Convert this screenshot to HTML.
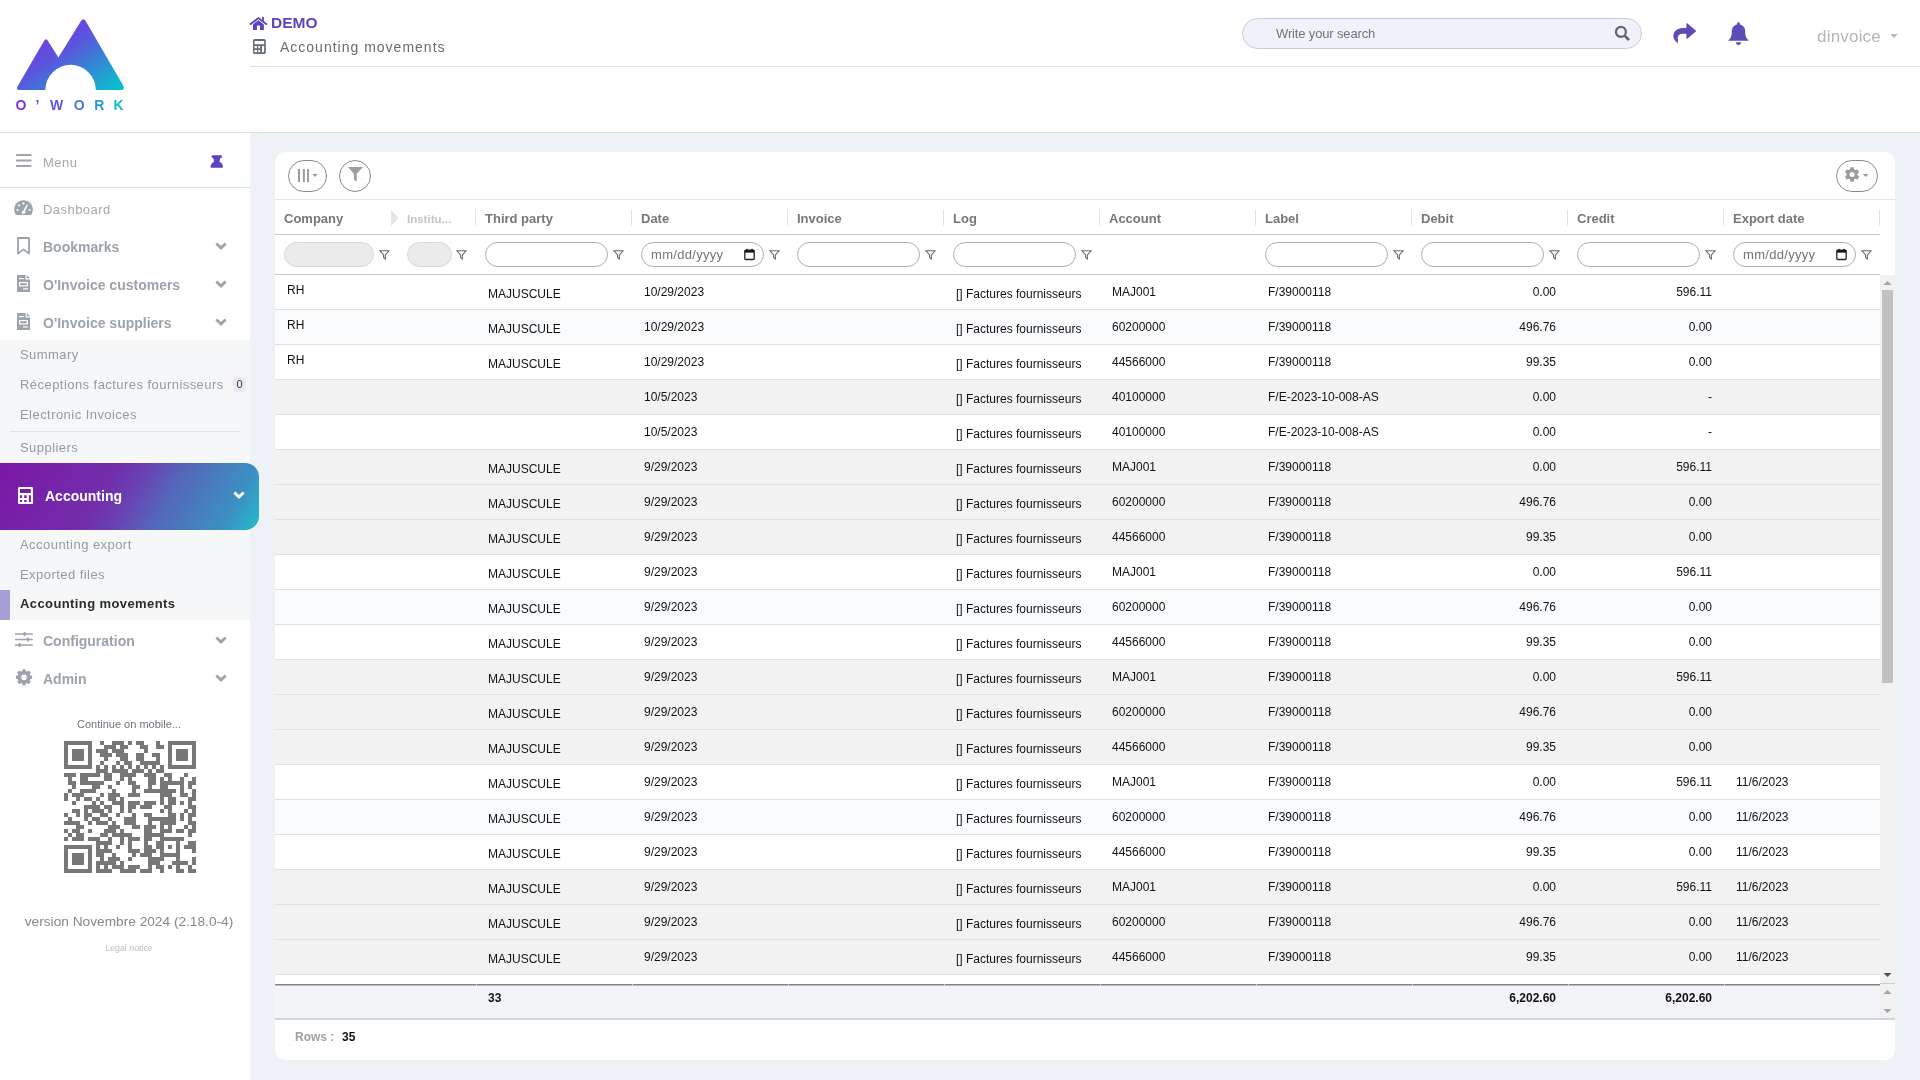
<!DOCTYPE html>
<html><head><meta charset="utf-8"><style>
*{box-sizing:border-box;margin:0;padding:0}
html,body{width:1920px;height:1080px;overflow:hidden;background:#fff;font-family:"Liberation Sans",sans-serif}
body{will-change:transform}
.abs{position:absolute}
#main{position:absolute;left:250px;top:133px;width:1670px;height:947px;background:#eef1f6}
#hdrline{position:absolute;left:250px;top:66px;width:1670px;height:1px;background:#dee2e6}
#sbline{position:absolute;left:0;top:132px;width:1920px;height:1px;background:#dde2e8}
.sb{position:absolute;white-space:nowrap}
.mi{position:absolute;left:43px;font-size:14px;font-weight:bold;color:#9ca3ab;white-space:nowrap;line-height:16px}
.si{position:absolute;left:20px;font-size:13px;color:#959a9f;white-space:nowrap;line-height:15px;letter-spacing:0.45px}
.chev{position:absolute;left:214.5px;width:12px;height:8px}
#card{position:absolute;left:275px;top:152px;width:1620px;height:908px;background:#fff;border-radius:10px;overflow:hidden}
.tr{position:absolute;left:0;width:1605px;height:35px;border-bottom:1px solid #dde1e3}
.c{position:absolute;font-size:12px;color:#111;white-space:nowrap;line-height:14px}
.c.r{left:auto}
.th{position:absolute;top:59px;font-size:13px;font-weight:bold;color:#777;white-space:nowrap;line-height:15px}
.sep{position:absolute;top:58px;width:1px;height:16px;background:#e2e2e2}
.fi{position:absolute;top:90px;height:25px;border:1px solid #a3b3b3;border-radius:13px;background:#fff}
.fi.dis{background:#ebebeb;border-color:#d4dada}
.fn{position:absolute;top:98px}
.dt{position:absolute;top:96px;font-size:13px;color:#757575;line-height:14px;letter-spacing:0.3px}
.cal{position:absolute;top:96px;width:11px;height:13px}
</style></head><body>

<div id="main"></div>
<!-- header -->
<svg class="abs" style="left:15px;top:17px" width="125" height="100" viewBox="15 17 125 100">
<defs><linearGradient id="lg" x1="0" y1="0" x2="1" y2="1" gradientUnits="objectBoundingBox">
<stop offset="0" stop-color="#8f22f0"/><stop offset="0.45" stop-color="#5a55dc"/><stop offset="1" stop-color="#00cacc"/></linearGradient>
<linearGradient id="lg2" x1="0" y1="0" x2="1" y2="0"><stop offset="0" stop-color="#7a35e0"/><stop offset="1" stop-color="#10c0cf"/></linearGradient></defs>
<path d="M17.5 86.5 L44 41 Q46 37.5 48 41 L58.4 57.5 L81 21 Q83.3 17.5 85.6 21 L123.5 86 Q125 90 121 90 L95.8 90 A25.2 25.2 0 0 0 45.4 90 L20 90 Q15.5 90 17.5 86.5 Z" fill="url(#lg)"/>
<g font-family="Liberation Sans" font-weight="bold" font-size="14" text-anchor="middle"><text x="21" y="110" fill="#7b35e6">O</text><text x="37.5" y="110" fill="#6a45e0">’</text><text x="56.6" y="110" fill="#5b58dc">W</text><text x="79.2" y="110" fill="#4a7ad8">O</text><text x="99.4" y="110" fill="#2e9ad4">R</text><text x="118.5" y="110" fill="#12bccf">K</text></g>
</svg>

<div id="hdrline"></div>
<div id="sbline"></div>

<svg class="abs" style="left:246px;top:12px" width="26" height="22" viewBox="0 0 26 22"><g fill="#5a45c0"><path d="M4.6 12.1 L12.4 6.1 L20.2 12.1" fill="none" stroke="#5a45c0" stroke-width="1.9" stroke-linecap="round" stroke-linejoin="miter"/><rect x="16.1" y="5" width="1.8" height="4.6"/><path d="M7 12.4 L12.4 8.2 L17.9 12.4 V17.9 H14 V13.4 H10.9 V17.9 H7 Z"/></g></svg>
<div class="sb" style="left:271px;top:14px;font-size:15.5px;font-weight:bold;color:#5a45c0;line-height:17px">DEMO</div>
<svg class="abs" style="left:252.8px;top:38.9px" width="12.8" height="15" viewBox="0 0 12.8 15"><path fill-rule="evenodd" d="M1.5 0 H11.3 Q12.8 0 12.8 1.5 V13.5 Q12.8 15 11.3 15 H1.5 Q0 15 0 13.5 V1.5 Q0 0 1.5 0 Z M1.50 1.90 H11.20 V5.20 H1.50 Z M1.50 6.90 H4.00 V9.30 H1.50 Z M5.20 6.90 H7.20 V9.30 H5.20 Z M1.50 10.90 H4.00 V13.20 H1.50 Z M5.20 10.90 H7.20 V13.20 H5.20 Z M9.00 6.90 H11.10 V13.20 H9.00 Z" fill="#656d74"/></svg>
<div class="sb" style="left:280px;top:39px;font-size:14px;color:#656d74;line-height:16px;letter-spacing:1px">Accounting movements</div>

<div class="abs" style="left:1242px;top:18px;width:400px;height:31px;border:1px solid #c9ced6;border-radius:16px;background:#f0f1fa"></div>
<div class="sb" style="left:1276px;top:26px;font-size:13px;color:#6c757d;line-height:15px;letter-spacing:-0.15px">Write your search</div>
<svg class="abs" style="left:1614px;top:25px" width="17" height="17" viewBox="0 0 17 17"><circle cx="6.9" cy="6.9" r="4.95" fill="none" stroke="#5f676e" stroke-width="2.2"/><path d="M10.6 10.6 L15.0 15.0" stroke="#5f676e" stroke-width="2.7" stroke-linecap="butt"/></svg>
<svg class="abs" style="left:1668px;top:18px" width="30" height="30" viewBox="0 0 30 30"><path d="M9.5 25.1 C6.2 22.5 4.9 19.5 5.4 16.8 C6.2 12.5 10.2 10.1 15.5 10.1 H18.4 V5.4 Q18.6 4.8 19.2 5.2 L27.8 12.5 Q28.2 13 27.8 13.5 L19.2 20.7 Q18.6 21.1 18.4 20.5 V15.7 H15.5 C11.5 15.7 9.8 17.3 9.8 19.8 C9.8 21.5 10.1 23.3 9.9 24.6 Q9.8 25.3 9.5 25.1 Z" fill="#5a4db8"/></svg>
<svg class="abs" style="left:1728px;top:22px" width="21" height="23" viewBox="0 0 21 23"><path d="M10.5 0.3 C11.4 0.3 11.9 1 11.9 1.8 V2.6 C15.2 3.3 17.2 6 17.2 9.4 C17.2 14.3 18.3 15.9 20.2 17.8 C20.8 18.4 20.6 18.8 19.9 18.8 H1.1 C0.4 18.8 0.2 18.4 0.8 17.8 C2.7 15.9 3.8 14.3 3.8 9.4 C3.8 6 5.8 3.3 9.1 2.6 V1.8 C9.1 1 9.6 0.3 10.5 0.3 Z M8 20.3 H13 C13 21.9 11.9 22.9 10.5 22.9 C9.1 22.9 8 21.9 8 20.3 Z" fill="#5a4db8"/></svg>
<div class="sb" style="left:1817px;top:27px;font-size:17px;color:#b3b8bd;line-height:20px;letter-spacing:0.2px">dinvoice</div>
<svg class="abs" style="left:1890px;top:34px" width="8" height="5" viewBox="0 0 8 5"><path d="M0.3 0 H7.7 L4 3.9 Z" fill="#b3b8bd"/></svg>

<!-- sidebar -->
<svg class="abs" style="left:16px;top:154px" width="16" height="14" viewBox="0 0 16 14"><g fill="#9ca3ab"><rect x="0" y="0.1" width="15.5" height="2" rx="0.9"/><rect x="0" y="5.6" width="15.5" height="2" rx="0.9"/><rect x="0" y="11" width="15.5" height="2" rx="0.9"/></g></svg>
<div class="sb" style="left:43px;top:155px;font-size:13px;color:#a3a9b0;line-height:16px;letter-spacing:0.5px">Menu</div>
<svg class="abs" style="left:208px;top:154px" width="16" height="15" viewBox="0 0 16 15"><path d="M4 1.5 Q4 1.2 5 1.2 H13 Q14 1.2 14 2.2 Q14 4.3 12 4.5 L11.5 7.8 Q14.8 9.3 15 12.8 Q15 13.8 14 13.8 H3.5 Q2.5 13.8 2.5 12.8 Q2.7 9.3 6 7.8 L5.5 4.5 Q3.5 4.3 3.5 2.2 Z" fill="#5a45c0"/></svg>
<div class="abs" style="left:0;top:187px;width:250px;height:1px;background:#dde2e8"></div>

<svg class="abs" style="left:14px;top:200px" width="19" height="16" viewBox="0 0 19 16"><path d="M9.5 0.3 C4.3 0.3 0.2 4.5 0.2 9.6 C0.2 11.6 0.8 13.5 1.9 15.1 H17.1 C18.2 13.5 18.8 11.6 18.8 9.6 C18.8 4.5 14.7 0.3 9.5 0.3 Z" fill="#9ca3ab"/><g fill="#fff"><circle cx="3.5" cy="10" r="1.1"/><circle cx="5" cy="5.3" r="1.1"/><circle cx="9.5" cy="3.4" r="1.1"/><circle cx="15.5" cy="10" r="1.1"/><path d="M12.8 4.2 L13.9 4.7 L11.2 11.2 C11.8 11.9 11.6 13.3 10.6 13.7 H8.3 C7.4 13 7.4 11.3 9.2 10.8 Z"/></g></svg>
<div class="sb" style="left:43px;top:202px;font-size:13px;color:#a3a9b0;line-height:16px;letter-spacing:0.45px">Dashboard</div>

<svg class="abs" style="left:17px;top:237px" width="13" height="18" viewBox="0 0 13 18"><path d="M1 1 H12 V16.6 L6.5 12.4 L1 16.6 Z" fill="none" stroke="#9ca3ab" stroke-width="1.8" stroke-linejoin="round"/></svg>
<div class="mi" style="top:239px">Bookmarks</div>
<svg class="chev" style="top:242px" viewBox="0 0 12 8"><path d="M1.4 1.4 L6 6 L10.6 1.4" fill="none" stroke="#9ca3ab" stroke-width="2.8"/></svg>

<svg class="abs" style="left:17px;top:275px" width="13" height="17" viewBox="0 0 13 17"><path d="M0 0 H8.5 V4.5 H13 V17 H0 Z M9.7 0 L13 3.3 H9.7 Z" fill="#9ca3ab"/><g fill="#fff"><rect x="2" y="3" width="5" height="1.2"/><rect x="2" y="7" width="9" height="4.5"/><rect x="6" y="13.3" width="5" height="1.2"/></g><rect x="3.2" y="8.2" width="6.6" height="2.1" fill="#9ca3ab"/></svg>
<div class="mi" style="top:277px">O'Invoice customers</div>
<svg class="chev" style="top:280px" viewBox="0 0 12 8"><path d="M1.4 1.4 L6 6 L10.6 1.4" fill="none" stroke="#9ca3ab" stroke-width="2.8"/></svg>

<svg class="abs" style="left:17px;top:313px" width="13" height="17" viewBox="0 0 13 17"><path d="M0 0 H8.5 V4.5 H13 V17 H0 Z M9.7 0 L13 3.3 H9.7 Z" fill="#9ca3ab"/><g fill="#fff"><rect x="2" y="3" width="5" height="1.2"/><rect x="2" y="7" width="9" height="4.5"/><rect x="6" y="13.3" width="5" height="1.2"/></g><rect x="3.2" y="8.2" width="6.6" height="2.1" fill="#9ca3ab"/></svg>
<div class="mi" style="top:315px">O'Invoice suppliers</div>
<svg class="chev" style="top:318px" viewBox="0 0 12 8"><path d="M1.4 1.4 L6 6 L10.6 1.4" fill="none" stroke="#9ca3ab" stroke-width="2.8"/></svg>

<div class="abs" style="left:0;top:340px;width:250px;height:123px;background:#f6f7f9"></div>
<div class="si" style="top:347px">Summary</div>
<div class="si" style="top:377px">Réceptions factures fournisseurs</div>
<div class="abs" style="left:233px;top:377px;width:13px;height:15px;background:#ebe8f6;border-radius:3px;font-size:11px;color:#333;text-align:center;line-height:15px">0</div>
<div class="si" style="top:407px">Electronic Invoices</div>
<div class="abs" style="left:10px;top:431px;width:230px;height:1px;background:#dfe2e6"></div>
<div class="si" style="top:440px">Suppliers</div>

<div class="abs" style="left:0;top:463px;width:259px;height:67px;border-radius:0 14px 14px 0;background:linear-gradient(120deg,#7b17a6 0%,#722eab 40%,#6a40b2 50%,#5566b9 63%,#3c90c2 87%,#22bccb 100%)"></div>
<svg class="abs" style="left:18.2px;top:486.9px" width="15.1" height="17.1" viewBox="0 0 15.1 17.1"><path fill-rule="evenodd" d="M1.5 0 H13.6 Q15.1 0 15.1 1.5 V15.600000000000001 Q15.1 17.1 13.6 17.1 H1.5 Q0 17.1 0 15.600000000000001 V1.5 Q0 0 1.5 0 Z M2.00 2.10 H12.80 V6.10 H2.00 Z M2.00 8.20 H4.10 V11.00 H2.00 Z M6.20 8.20 H8.70 V11.00 H6.20 Z M2.00 13.00 H4.10 V14.90 H2.00 Z M6.20 13.00 H8.70 V14.90 H6.20 Z M10.90 8.20 H12.90 V14.90 H10.90 Z" fill="#fff"/></svg>
<div class="mi" style="left:45px;top:488px;color:#fff">Accounting</div>
<svg class="chev" style="left:232.5px;top:491px" viewBox="0 0 12 8"><path d="M1.4 1.4 L6 6 L10.6 1.4" fill="none" stroke="#fff" stroke-width="2.8"/></svg>

<div class="abs" style="left:0;top:530px;width:250px;height:90px;background:#f6f7f9"></div>
<div class="si" style="top:537px">Accounting export</div>
<div class="si" style="top:567px">Exported files</div>
<div class="abs" style="left:0;top:590px;width:10px;height:30px;background:#a59fd5"></div>
<div class="si" style="top:596px;font-weight:bold;color:#2b2b2b;letter-spacing:0.4px">Accounting movements</div>

<svg class="abs" style="left:15px;top:632px" width="18" height="15" viewBox="0 0 18 15"><g fill="#9ca3ab"><rect x="0" y="1.2" width="17.8" height="1.6" rx="0.5"/><rect x="0" y="6.7" width="17.8" height="1.6" rx="0.5"/><rect x="0" y="12.2" width="17.8" height="1.6" rx="0.5"/><rect x="8.5" y="0" width="2.2" height="4" rx="0.8"/><rect x="11.8" y="5.5" width="2.2" height="4" rx="0.8"/><rect x="3.5" y="11" width="2.2" height="4" rx="0.8"/></g></svg>
<div class="mi" style="top:633px">Configuration</div>
<svg class="chev" style="top:636px" viewBox="0 0 12 8"><path d="M1.4 1.4 L6 6 L10.6 1.4" fill="none" stroke="#9ca3ab" stroke-width="2.8"/></svg>

<svg class="abs" style="left:14px;top:667px" width="20" height="20" viewBox="0 0 20 20"><path fill-rule="evenodd" d="M11.97 4.21 L11.49 2.14 L8.51 2.14 L8.03 4.21 L7.87 4.26 L7.71 4.32 L7.55 4.39 L7.39 4.45 L7.24 4.53 L7.09 4.60 L5.28 3.47 L3.17 5.58 L4.30 7.39 L4.23 7.54 L4.15 7.69 L4.09 7.85 L4.02 8.01 L3.96 8.17 L3.91 8.33 L1.84 8.81 L1.84 11.79 L3.91 12.27 L3.96 12.43 L4.02 12.59 L4.09 12.75 L4.15 12.91 L4.23 13.06 L4.30 13.21 L3.17 15.02 L5.28 17.13 L7.09 16.00 L7.24 16.07 L7.39 16.15 L7.55 16.21 L7.71 16.28 L7.87 16.34 L8.03 16.39 L8.51 18.46 L11.49 18.46 L11.97 16.39 L12.13 16.34 L12.29 16.28 L12.45 16.21 L12.61 16.15 L12.76 16.07 L12.91 16.00 L14.72 17.13 L16.83 15.02 L15.70 13.21 L15.77 13.06 L15.85 12.91 L15.91 12.75 L15.98 12.59 L16.04 12.43 L16.09 12.27 L18.16 11.79 L18.16 8.81 L16.09 8.33 L16.04 8.17 L15.98 8.01 L15.91 7.85 L15.85 7.69 L15.77 7.54 L15.70 7.39 L16.83 5.58 L14.72 3.47 L12.91 4.60 L12.76 4.53 L12.61 4.45 L12.45 4.39 L12.29 4.32 L12.13 4.26 Z M12.8 10.3 A2.8 2.8 0 1 0 7.2 10.3 A2.8 2.8 0 1 0 12.8 10.3 Z" fill="#9ca3ab"/></svg>
<div class="mi" style="top:671px">Admin</div>
<svg class="chev" style="top:674px" viewBox="0 0 12 8"><path d="M1.4 1.4 L6 6 L10.6 1.4" fill="none" stroke="#9ca3ab" stroke-width="2.8"/></svg>

<div class="sb" style="left:0;width:258px;text-align:center;top:718px;font-size:11px;color:#6c757d;line-height:13px">Continue on mobile...</div>
<svg class="abs" style="left:64px;top:741px" width="132" height="132" viewBox="0 0 132 132"><path d="M0 0h28v4h-28zM36 0h4v4h-4zM48 0h12v4h-12zM64 0h4v4h-4zM72 0h8v4h-8zM92 0h4v4h-4zM104 0h28v4h-28zM0 4h4v4h-4zM24 4h4v4h-4zM40 4h12v4h-12zM56 4h8v4h-8zM76 4h8v4h-8zM92 4h8v4h-8zM104 4h4v4h-4zM128 4h4v4h-4zM0 8h4v4h-4zM8 8h12v4h-12zM24 8h4v4h-4zM32 8h12v4h-12zM48 8h12v4h-12zM80 8h4v4h-4zM104 8h4v4h-4zM112 8h12v4h-12zM128 8h4v4h-4zM0 12h4v4h-4zM8 12h12v4h-12zM24 12h4v4h-4zM36 12h12v4h-12zM52 12h12v4h-12zM72 12h8v4h-8zM88 12h8v4h-8zM104 12h4v4h-4zM112 12h12v4h-12zM128 12h4v4h-4zM0 16h4v4h-4zM8 16h12v4h-12zM24 16h4v4h-4zM40 16h4v4h-4zM56 16h8v4h-8zM72 16h8v4h-8zM92 16h4v4h-4zM104 16h4v4h-4zM112 16h12v4h-12zM128 16h4v4h-4zM0 20h4v4h-4zM24 20h4v4h-4zM36 20h4v4h-4zM52 20h4v4h-4zM60 20h8v4h-8zM76 20h20v4h-20zM104 20h4v4h-4zM128 20h4v4h-4zM0 24h28v4h-28zM32 24h4v4h-4zM40 24h4v4h-4zM48 24h4v4h-4zM56 24h4v4h-4zM64 24h4v4h-4zM72 24h4v4h-4zM80 24h4v4h-4zM88 24h4v4h-4zM96 24h4v4h-4zM104 24h28v4h-28zM32 28h12v4h-12zM48 28h16v4h-16zM68 28h12v4h-12zM84 28h4v4h-4zM92 28h8v4h-8zM0 32h12v4h-12zM16 32h20v4h-20zM40 32h8v4h-8zM56 32h16v4h-16zM80 32h12v4h-12zM100 32h8v4h-8zM120 32h4v4h-4zM4 36h4v4h-4zM16 36h8v4h-8zM40 36h8v4h-8zM56 36h4v4h-4zM64 36h4v4h-4zM84 36h8v4h-8zM96 36h4v4h-4zM104 36h4v4h-4zM116 36h4v4h-4zM128 36h4v4h-4zM4 40h8v4h-8zM16 40h24v4h-24zM52 40h4v4h-4zM64 40h8v4h-8zM84 40h8v4h-8zM96 40h24v4h-24zM124 40h8v4h-8zM8 44h4v4h-4zM28 44h8v4h-8zM44 44h4v4h-4zM68 44h8v4h-8zM84 44h4v4h-4zM96 44h8v4h-8zM116 44h4v4h-4zM124 44h4v4h-4zM4 48h4v4h-4zM16 48h16v4h-16zM48 48h4v4h-4zM68 48h4v4h-4zM80 48h32v4h-32zM116 48h4v4h-4zM128 48h4v4h-4zM0 52h4v4h-4zM8 52h12v4h-12zM36 52h4v4h-4zM44 52h12v4h-12zM64 52h12v4h-12zM96 52h12v4h-12zM116 52h8v4h-8zM128 52h4v4h-4zM0 56h4v4h-4zM12 56h4v4h-4zM20 56h8v4h-8zM32 56h4v4h-4zM44 56h8v4h-8zM56 56h4v4h-4zM96 56h4v4h-4zM104 56h8v4h-8zM124 56h8v4h-8zM8 60h4v4h-4zM28 60h4v4h-4zM36 60h4v4h-4zM48 60h12v4h-12zM64 60h12v4h-12zM80 60h12v4h-12zM96 60h4v4h-4zM104 60h8v4h-8zM116 60h4v4h-4zM124 60h4v4h-4zM20 64h16v4h-16zM40 64h8v4h-8zM56 64h4v4h-4zM64 64h8v4h-8zM76 64h12v4h-12zM100 64h8v4h-8zM124 64h8v4h-8zM8 68h8v4h-8zM20 68h4v4h-4zM28 68h12v4h-12zM44 68h4v4h-4zM56 68h4v4h-4zM64 68h4v4h-4zM96 68h4v4h-4zM104 68h4v4h-4zM120 68h4v4h-4zM128 68h4v4h-4zM0 72h4v4h-4zM12 72h4v4h-4zM20 72h8v4h-8zM36 72h8v4h-8zM52 72h4v4h-4zM68 72h4v4h-4zM80 72h8v4h-8zM104 72h8v4h-8zM116 72h4v4h-4zM124 72h8v4h-8zM4 76h4v4h-4zM20 76h4v4h-4zM28 76h8v4h-8zM44 76h4v4h-4zM60 76h12v4h-12zM84 76h28v4h-28zM116 76h4v4h-4zM124 76h4v4h-4zM0 80h16v4h-16zM24 80h4v4h-4zM32 80h12v4h-12zM48 80h4v4h-4zM60 80h12v4h-12zM84 80h4v4h-4zM96 80h16v4h-16zM124 80h8v4h-8zM12 84h8v4h-8zM44 84h12v4h-12zM68 84h8v4h-8zM80 84h12v4h-12zM96 84h4v4h-4zM104 84h4v4h-4zM120 84h4v4h-4zM128 84h4v4h-4zM0 88h4v4h-4zM8 88h8v4h-8zM24 88h4v4h-4zM40 88h12v4h-12zM56 88h4v4h-4zM80 88h8v4h-8zM96 88h12v4h-12zM112 88h8v4h-8zM124 88h8v4h-8zM4 92h4v4h-4zM12 92h8v4h-8zM36 92h8v4h-8zM48 92h20v4h-20zM80 92h20v4h-20zM124 92h4v4h-4zM0 96h4v4h-4zM8 96h12v4h-12zM24 96h12v4h-12zM44 96h4v4h-4zM56 96h4v4h-4zM64 96h12v4h-12zM80 96h8v4h-8zM96 96h24v4h-24zM32 100h16v4h-16zM56 100h4v4h-4zM64 100h4v4h-4zM80 100h4v4h-4zM92 100h8v4h-8zM112 100h4v4h-4zM124 100h8v4h-8zM0 104h28v4h-28zM32 104h4v4h-4zM40 104h4v4h-4zM52 104h4v4h-4zM64 104h4v4h-4zM80 104h8v4h-8zM92 104h8v4h-8zM104 104h4v4h-4zM112 104h4v4h-4zM120 104h12v4h-12zM0 108h4v4h-4zM24 108h4v4h-4zM32 108h16v4h-16zM64 108h12v4h-12zM80 108h12v4h-12zM96 108h4v4h-4zM112 108h4v4h-4zM128 108h4v4h-4zM0 112h4v4h-4zM8 112h12v4h-12zM24 112h4v4h-4zM32 112h8v4h-8zM48 112h4v4h-4zM68 112h4v4h-4zM76 112h12v4h-12zM96 112h20v4h-20zM0 116h4v4h-4zM8 116h12v4h-12zM24 116h4v4h-4zM36 116h4v4h-4zM44 116h12v4h-12zM64 116h4v4h-4zM84 116h16v4h-16zM112 116h4v4h-4zM128 116h4v4h-4zM0 120h4v4h-4zM8 120h12v4h-12zM24 120h4v4h-4zM32 120h20v4h-20zM56 120h4v4h-4zM84 120h12v4h-12zM108 120h16v4h-16zM128 120h4v4h-4zM0 124h4v4h-4zM24 124h4v4h-4zM32 124h4v4h-4zM40 124h4v4h-4zM48 124h12v4h-12zM64 124h12v4h-12zM84 124h4v4h-4zM92 124h8v4h-8zM104 124h4v4h-4zM112 124h4v4h-4zM124 124h4v4h-4zM0 128h28v4h-28zM32 128h16v4h-16zM56 128h16v4h-16zM76 128h12v4h-12zM96 128h4v4h-4zM112 128h8v4h-8zM124 128h8v4h-8z" fill="#777" shape-rendering="crispEdges"/></svg>
<div class="sb" style="left:0;width:258px;text-align:center;top:914px;font-size:13.7px;color:#888;line-height:16px">version Novembre 2024 (2.18.0-4)</div>
<div class="sb" style="left:0;width:258px;text-align:center;top:943px;font-size:8.8px;color:#bbb;line-height:11px">Legal notice</div>

<div id="card">
 <div class="abs" style="left:13px;top:8px;width:39px;height:32px;border:1px solid #8a8a8a;border-radius:16px"></div>
 <svg class="abs" style="left:23px;top:17px" width="20" height="13" viewBox="0 0 20 13"><g fill="#999da0"><rect x="0" y="0" width="2" height="13"/><rect x="4.9" y="0" width="2" height="13"/><rect x="9" y="0" width="2" height="13"/><path d="M14.3 5 H19.8 L17.05 8 Z"/></g></svg>
 <div class="abs" style="left:64px;top:8px;width:32px;height:32px;border:1px solid #8a8a8a;border-radius:16px"></div>
 <svg class="abs" style="left:73px;top:15px" width="15" height="15" viewBox="0 0 15 15"><path d="M0 0 H15 L8.7 6.8 V14.8 L5.9 12.4 V6.8 Z" fill="#999da0"/></svg>
 <div class="abs" style="left:1561px;top:8px;width:42px;height:32px;border:1px solid #8a8a8a;border-radius:16px"></div>
 <svg class="abs" style="left:1562px;top:7px" width="32" height="32" viewBox="0 0 32 32"><path fill-rule="evenodd" d="M17.24 10.44 L16.69 8.17 L13.51 8.17 L12.96 10.44 L12.77 10.53 L12.58 10.62 L12.40 10.72 L12.22 10.83 L12.05 10.95 L11.88 11.07 L9.63 10.41 L8.05 13.16 L9.74 14.77 L9.72 14.98 L9.70 15.19 L9.70 15.40 L9.70 15.61 L9.72 15.82 L9.74 16.03 L8.05 17.64 L9.63 20.39 L11.88 19.73 L12.05 19.85 L12.22 19.97 L12.40 20.08 L12.58 20.18 L12.77 20.27 L12.96 20.36 L13.51 22.63 L16.69 22.63 L17.24 20.36 L17.43 20.27 L17.62 20.18 L17.80 20.08 L17.98 19.97 L18.15 19.85 L18.32 19.73 L20.57 20.39 L22.15 17.64 L20.46 16.03 L20.48 15.82 L20.50 15.61 L20.50 15.40 L20.50 15.19 L20.48 14.98 L20.46 14.77 L22.15 13.16 L20.57 10.41 L18.32 11.07 L18.15 10.95 L17.98 10.83 L17.80 10.72 L17.62 10.62 L17.43 10.53 Z M17.6 15.4 A2.5 2.5 0 1 0 12.6 15.4 A2.5 2.5 0 1 0 17.6 15.4 Z" fill="#999da0"/><path d="M25.8 14.9 H31.6 L28.7 17.9 Z" fill="#999da0"/></svg>
 <div class="abs" style="left:0;top:47px;width:1620px;height:1px;background:#e6e6e6"></div>

 <div class="th" style="left:9px">Company</div>
<div class="th" style="left:210px">Third party</div>
<div class="th" style="left:366px">Date</div>
<div class="th" style="left:522px">Invoice</div>
<div class="th" style="left:678px">Log</div>
<div class="th" style="left:834px">Account</div>
<div class="th" style="left:990px">Label</div>
<div class="th" style="left:1146px">Debit</div>
<div class="th" style="left:1302px">Credit</div>
<div class="th" style="left:1458px">Export date</div>
<svg class="abs" style="left:116px;top:58px" width="8" height="16" viewBox="0 0 8 16"><path d="M0 0 L7.5 8 L0 16 Z" fill="#e4e4e4"/></svg>
<div class="th" style="left:132px;top:61px;font-size:11.5px;color:#c4c4c4;line-height:13px">Institu...</div>
<div class="sep" style="left:200px"></div>
<div class="sep" style="left:356px"></div>
<div class="sep" style="left:512px"></div>
<div class="sep" style="left:668px"></div>
<div class="sep" style="left:824px"></div>
<div class="sep" style="left:980px"></div>
<div class="sep" style="left:1136px"></div>
<div class="sep" style="left:1292px"></div>
<div class="sep" style="left:1448px"></div>
<div class="sep" style="left:1604px"></div>

 <div class="abs" style="left:0;top:82px;width:1605px;height:1px;background:#c5cbce"></div>
 <div class="fi dis" style="left:9px;width:90px"></div><svg class="fn" style="left:104px" width="11" height="10" viewBox="0 0 11 10"><path d="M0.7 0.7 H10.3 L6.4 4.8 V9.2 L4.6 7.6 V4.8 Z" fill="none" stroke="#6a6a6a" stroke-width="1.1" stroke-linejoin="round"/></svg>
<div class="fi dis" style="left:132px;width:45px"></div><svg class="fn" style="left:181px" width="11" height="10" viewBox="0 0 11 10"><path d="M0.7 0.7 H10.3 L6.4 4.8 V9.2 L4.6 7.6 V4.8 Z" fill="none" stroke="#6a6a6a" stroke-width="1.1" stroke-linejoin="round"/></svg>
<div class="fi" style="left:210px;width:123px"></div>
<svg class="fn" style="left:338px" width="11" height="10" viewBox="0 0 11 10"><path d="M0.7 0.7 H10.3 L6.4 4.8 V9.2 L4.6 7.6 V4.8 Z" fill="none" stroke="#6a6a6a" stroke-width="1.1" stroke-linejoin="round"/></svg>
<div class="fi" style="left:366px;width:123px"></div>
<svg class="fn" style="left:494px" width="11" height="10" viewBox="0 0 11 10"><path d="M0.7 0.7 H10.3 L6.4 4.8 V9.2 L4.6 7.6 V4.8 Z" fill="none" stroke="#6a6a6a" stroke-width="1.1" stroke-linejoin="round"/></svg>
<div class="fi" style="left:522px;width:123px"></div>
<svg class="fn" style="left:650px" width="11" height="10" viewBox="0 0 11 10"><path d="M0.7 0.7 H10.3 L6.4 4.8 V9.2 L4.6 7.6 V4.8 Z" fill="none" stroke="#6a6a6a" stroke-width="1.1" stroke-linejoin="round"/></svg>
<div class="fi" style="left:678px;width:123px"></div>
<svg class="fn" style="left:806px" width="11" height="10" viewBox="0 0 11 10"><path d="M0.7 0.7 H10.3 L6.4 4.8 V9.2 L4.6 7.6 V4.8 Z" fill="none" stroke="#6a6a6a" stroke-width="1.1" stroke-linejoin="round"/></svg>
<div class="fi" style="left:990px;width:123px"></div>
<svg class="fn" style="left:1118px" width="11" height="10" viewBox="0 0 11 10"><path d="M0.7 0.7 H10.3 L6.4 4.8 V9.2 L4.6 7.6 V4.8 Z" fill="none" stroke="#6a6a6a" stroke-width="1.1" stroke-linejoin="round"/></svg>
<div class="fi" style="left:1146px;width:123px"></div>
<svg class="fn" style="left:1274px" width="11" height="10" viewBox="0 0 11 10"><path d="M0.7 0.7 H10.3 L6.4 4.8 V9.2 L4.6 7.6 V4.8 Z" fill="none" stroke="#6a6a6a" stroke-width="1.1" stroke-linejoin="round"/></svg>
<div class="fi" style="left:1302px;width:123px"></div>
<svg class="fn" style="left:1430px" width="11" height="10" viewBox="0 0 11 10"><path d="M0.7 0.7 H10.3 L6.4 4.8 V9.2 L4.6 7.6 V4.8 Z" fill="none" stroke="#6a6a6a" stroke-width="1.1" stroke-linejoin="round"/></svg>
<div class="fi" style="left:1458px;width:123px"></div>
<svg class="fn" style="left:1586px" width="11" height="10" viewBox="0 0 11 10"><path d="M0.7 0.7 H10.3 L6.4 4.8 V9.2 L4.6 7.6 V4.8 Z" fill="none" stroke="#6a6a6a" stroke-width="1.1" stroke-linejoin="round"/></svg>
<div class="dt" style="left:376px">mm/dd/yyyy</div>
<svg class="cal" style="left:469px" viewBox="0 0 11 13"><rect x="0.8" y="2.2" width="9.4" height="9.3" rx="1" fill="none" stroke="#222" stroke-width="1.3"/><rect x="0.8" y="2.2" width="9.4" height="2.4" fill="#111"/><rect x="2.3" y="0.8" width="1.3" height="2" fill="#111"/><rect x="7.4" y="0.8" width="1.3" height="2" fill="#111"/></svg>
<div class="dt" style="left:1468px">mm/dd/yyyy</div>
<svg class="cal" style="left:1561px" viewBox="0 0 11 13"><rect x="0.8" y="2.2" width="9.4" height="9.3" rx="1" fill="none" stroke="#222" stroke-width="1.3"/><rect x="0.8" y="2.2" width="9.4" height="2.4" fill="#111"/><rect x="2.3" y="0.8" width="1.3" height="2" fill="#111"/><rect x="7.4" y="0.8" width="1.3" height="2" fill="#111"/></svg>
 <div class="abs" style="left:0;top:122px;width:1605px;height:1px;background:#c5cbce"></div>

 <div class="tr" style="top:123px;background:#ffffff"><span class="c" style="left:12px;top:8px">RH</span><span class="c" style="left:213px;top:12px">MAJUSCULE</span><span class="c" style="left:369px;top:10px">10/29/2023</span><span class="c" style="left:681px;top:12px">[] Factures fournisseurs</span><span class="c" style="left:837px;top:10px">MAJ001</span><span class="c" style="left:993px;top:10px">F/39000118</span><span class="c r" style="right:324px;top:10px">0.00</span><span class="c r" style="right:168px;top:10px">596.11</span></div>
<div class="tr" style="top:158px;background:#fafbfd"><span class="c" style="left:12px;top:8px">RH</span><span class="c" style="left:213px;top:12px">MAJUSCULE</span><span class="c" style="left:369px;top:10px">10/29/2023</span><span class="c" style="left:681px;top:12px">[] Factures fournisseurs</span><span class="c" style="left:837px;top:10px">60200000</span><span class="c" style="left:993px;top:10px">F/39000118</span><span class="c r" style="right:324px;top:10px">496.76</span><span class="c r" style="right:168px;top:10px">0.00</span></div>
<div class="tr" style="top:193px;background:#ffffff"><span class="c" style="left:12px;top:8px">RH</span><span class="c" style="left:213px;top:12px">MAJUSCULE</span><span class="c" style="left:369px;top:10px">10/29/2023</span><span class="c" style="left:681px;top:12px">[] Factures fournisseurs</span><span class="c" style="left:837px;top:10px">44566000</span><span class="c" style="left:993px;top:10px">F/39000118</span><span class="c r" style="right:324px;top:10px">99.35</span><span class="c r" style="right:168px;top:10px">0.00</span></div>
<div class="tr" style="top:228px;background:#f2f2f2"><span class="c" style="left:369px;top:10px">10/5/2023</span><span class="c" style="left:681px;top:12px">[] Factures fournisseurs</span><span class="c" style="left:837px;top:10px">40100000</span><span class="c" style="left:993px;top:10px">F/E-2023-10-008-AS</span><span class="c r" style="right:324px;top:10px">0.00</span><span class="c r" style="right:168px;top:10px">-</span></div>
<div class="tr" style="top:263px;background:#ffffff"><span class="c" style="left:369px;top:10px">10/5/2023</span><span class="c" style="left:681px;top:12px">[] Factures fournisseurs</span><span class="c" style="left:837px;top:10px">40100000</span><span class="c" style="left:993px;top:10px">F/E-2023-10-008-AS</span><span class="c r" style="right:324px;top:10px">0.00</span><span class="c r" style="right:168px;top:10px">-</span></div>
<div class="tr" style="top:298px;background:#f2f2f2"><span class="c" style="left:213px;top:12px">MAJUSCULE</span><span class="c" style="left:369px;top:10px">9/29/2023</span><span class="c" style="left:681px;top:12px">[] Factures fournisseurs</span><span class="c" style="left:837px;top:10px">MAJ001</span><span class="c" style="left:993px;top:10px">F/39000118</span><span class="c r" style="right:324px;top:10px">0.00</span><span class="c r" style="right:168px;top:10px">596.11</span></div>
<div class="tr" style="top:333px;background:#f2f2f2"><span class="c" style="left:213px;top:12px">MAJUSCULE</span><span class="c" style="left:369px;top:10px">9/29/2023</span><span class="c" style="left:681px;top:12px">[] Factures fournisseurs</span><span class="c" style="left:837px;top:10px">60200000</span><span class="c" style="left:993px;top:10px">F/39000118</span><span class="c r" style="right:324px;top:10px">496.76</span><span class="c r" style="right:168px;top:10px">0.00</span></div>
<div class="tr" style="top:368px;background:#f2f2f2"><span class="c" style="left:213px;top:12px">MAJUSCULE</span><span class="c" style="left:369px;top:10px">9/29/2023</span><span class="c" style="left:681px;top:12px">[] Factures fournisseurs</span><span class="c" style="left:837px;top:10px">44566000</span><span class="c" style="left:993px;top:10px">F/39000118</span><span class="c r" style="right:324px;top:10px">99.35</span><span class="c r" style="right:168px;top:10px">0.00</span></div>
<div class="tr" style="top:403px;background:#ffffff"><span class="c" style="left:213px;top:12px">MAJUSCULE</span><span class="c" style="left:369px;top:10px">9/29/2023</span><span class="c" style="left:681px;top:12px">[] Factures fournisseurs</span><span class="c" style="left:837px;top:10px">MAJ001</span><span class="c" style="left:993px;top:10px">F/39000118</span><span class="c r" style="right:324px;top:10px">0.00</span><span class="c r" style="right:168px;top:10px">596.11</span></div>
<div class="tr" style="top:438px;background:#fafbfd"><span class="c" style="left:213px;top:12px">MAJUSCULE</span><span class="c" style="left:369px;top:10px">9/29/2023</span><span class="c" style="left:681px;top:12px">[] Factures fournisseurs</span><span class="c" style="left:837px;top:10px">60200000</span><span class="c" style="left:993px;top:10px">F/39000118</span><span class="c r" style="right:324px;top:10px">496.76</span><span class="c r" style="right:168px;top:10px">0.00</span></div>
<div class="tr" style="top:473px;background:#ffffff"><span class="c" style="left:213px;top:12px">MAJUSCULE</span><span class="c" style="left:369px;top:10px">9/29/2023</span><span class="c" style="left:681px;top:12px">[] Factures fournisseurs</span><span class="c" style="left:837px;top:10px">44566000</span><span class="c" style="left:993px;top:10px">F/39000118</span><span class="c r" style="right:324px;top:10px">99.35</span><span class="c r" style="right:168px;top:10px">0.00</span></div>
<div class="tr" style="top:508px;background:#f2f2f2"><span class="c" style="left:213px;top:12px">MAJUSCULE</span><span class="c" style="left:369px;top:10px">9/29/2023</span><span class="c" style="left:681px;top:12px">[] Factures fournisseurs</span><span class="c" style="left:837px;top:10px">MAJ001</span><span class="c" style="left:993px;top:10px">F/39000118</span><span class="c r" style="right:324px;top:10px">0.00</span><span class="c r" style="right:168px;top:10px">596.11</span></div>
<div class="tr" style="top:543px;background:#f2f2f2"><span class="c" style="left:213px;top:12px">MAJUSCULE</span><span class="c" style="left:369px;top:10px">9/29/2023</span><span class="c" style="left:681px;top:12px">[] Factures fournisseurs</span><span class="c" style="left:837px;top:10px">60200000</span><span class="c" style="left:993px;top:10px">F/39000118</span><span class="c r" style="right:324px;top:10px">496.76</span><span class="c r" style="right:168px;top:10px">0.00</span></div>
<div class="tr" style="top:578px;background:#f2f2f2"><span class="c" style="left:213px;top:12px">MAJUSCULE</span><span class="c" style="left:369px;top:10px">9/29/2023</span><span class="c" style="left:681px;top:12px">[] Factures fournisseurs</span><span class="c" style="left:837px;top:10px">44566000</span><span class="c" style="left:993px;top:10px">F/39000118</span><span class="c r" style="right:324px;top:10px">99.35</span><span class="c r" style="right:168px;top:10px">0.00</span></div>
<div class="tr" style="top:613px;background:#ffffff"><span class="c" style="left:213px;top:12px">MAJUSCULE</span><span class="c" style="left:369px;top:10px">9/29/2023</span><span class="c" style="left:681px;top:12px">[] Factures fournisseurs</span><span class="c" style="left:837px;top:10px">MAJ001</span><span class="c" style="left:993px;top:10px">F/39000118</span><span class="c r" style="right:324px;top:10px">0.00</span><span class="c r" style="right:168px;top:10px">596.11</span><span class="c" style="left:1461px;top:10px">11/6/2023</span></div>
<div class="tr" style="top:648px;background:#fafbfd"><span class="c" style="left:213px;top:12px">MAJUSCULE</span><span class="c" style="left:369px;top:10px">9/29/2023</span><span class="c" style="left:681px;top:12px">[] Factures fournisseurs</span><span class="c" style="left:837px;top:10px">60200000</span><span class="c" style="left:993px;top:10px">F/39000118</span><span class="c r" style="right:324px;top:10px">496.76</span><span class="c r" style="right:168px;top:10px">0.00</span><span class="c" style="left:1461px;top:10px">11/6/2023</span></div>
<div class="tr" style="top:683px;background:#ffffff"><span class="c" style="left:213px;top:12px">MAJUSCULE</span><span class="c" style="left:369px;top:10px">9/29/2023</span><span class="c" style="left:681px;top:12px">[] Factures fournisseurs</span><span class="c" style="left:837px;top:10px">44566000</span><span class="c" style="left:993px;top:10px">F/39000118</span><span class="c r" style="right:324px;top:10px">99.35</span><span class="c r" style="right:168px;top:10px">0.00</span><span class="c" style="left:1461px;top:10px">11/6/2023</span></div>
<div class="tr" style="top:718px;background:#f2f2f2"><span class="c" style="left:213px;top:12px">MAJUSCULE</span><span class="c" style="left:369px;top:10px">9/29/2023</span><span class="c" style="left:681px;top:12px">[] Factures fournisseurs</span><span class="c" style="left:837px;top:10px">MAJ001</span><span class="c" style="left:993px;top:10px">F/39000118</span><span class="c r" style="right:324px;top:10px">0.00</span><span class="c r" style="right:168px;top:10px">596.11</span><span class="c" style="left:1461px;top:10px">11/6/2023</span></div>
<div class="tr" style="top:753px;background:#f2f2f2"><span class="c" style="left:213px;top:12px">MAJUSCULE</span><span class="c" style="left:369px;top:10px">9/29/2023</span><span class="c" style="left:681px;top:12px">[] Factures fournisseurs</span><span class="c" style="left:837px;top:10px">60200000</span><span class="c" style="left:993px;top:10px">F/39000118</span><span class="c r" style="right:324px;top:10px">496.76</span><span class="c r" style="right:168px;top:10px">0.00</span><span class="c" style="left:1461px;top:10px">11/6/2023</span></div>
<div class="tr" style="top:788px;background:#f2f2f2"><span class="c" style="left:213px;top:12px">MAJUSCULE</span><span class="c" style="left:369px;top:10px">9/29/2023</span><span class="c" style="left:681px;top:12px">[] Factures fournisseurs</span><span class="c" style="left:837px;top:10px">44566000</span><span class="c" style="left:993px;top:10px">F/39000118</span><span class="c r" style="right:324px;top:10px">99.35</span><span class="c r" style="right:168px;top:10px">0.00</span><span class="c" style="left:1461px;top:10px">11/6/2023</span></div>

 <div class="abs" style="left:0;top:832px;width:1605px;height:1px;background:#7f8387"></div>
 <div class="abs" style="left:0;top:833px;width:1605px;height:1px;background:#b9bcc0"></div>
 <div class="abs" style="left:0;top:834px;width:1605px;height:34px;background:#f3f4f8;border-bottom:2px solid #d2d5d8"></div>
 <div class="c" style="left:213px;top:839px;font-weight:bold">33</div>
 <div class="abs" style="left:201px;top:832px;width:1px;height:2px;background:#d0d2d4"></div><div class="abs" style="left:357px;top:832px;width:1px;height:2px;background:#d0d2d4"></div><div class="abs" style="left:513px;top:832px;width:1px;height:2px;background:#d0d2d4"></div><div class="abs" style="left:669px;top:832px;width:1px;height:2px;background:#d0d2d4"></div><div class="abs" style="left:825px;top:832px;width:1px;height:2px;background:#d0d2d4"></div><div class="abs" style="left:981px;top:832px;width:1px;height:2px;background:#d0d2d4"></div><div class="abs" style="left:1137px;top:832px;width:1px;height:2px;background:#d0d2d4"></div><div class="abs" style="left:1293px;top:832px;width:1px;height:2px;background:#d0d2d4"></div><div class="abs" style="left:1449px;top:832px;width:1px;height:2px;background:#d0d2d4"></div>
 <div class="c" style="right:339px;top:839px;font-weight:bold">6,202.60</div>
 <div class="c" style="right:183px;top:839px;font-weight:bold">6,202.60</div>
 <div class="abs" style="left:1605px;top:123px;width:15px;height:744px;background:#f1f1f1"></div>
 <div class="abs" style="left:1607px;top:138px;width:11px;height:393px;background:#c1c1c1"></div>
 <svg class="abs" style="left:1608px;top:128px" width="9" height="6" viewBox="0 0 9 6"><path d="M0.5 5 H8.5 L4.5 1 Z" fill="#a3a3a3"/></svg>
 <svg class="abs" style="left:1608px;top:820px" width="9" height="6" viewBox="0 0 9 6"><path d="M0.5 1 H8.5 L4.5 5 Z" fill="#505050"/></svg>
 <svg class="abs" style="left:1608px;top:837px" width="9" height="6" viewBox="0 0 9 6"><path d="M0.5 5 H8.5 L4.5 1 Z" fill="#a3a3a3"/></svg>
 <svg class="abs" style="left:1608px;top:856px" width="9" height="6" viewBox="0 0 9 6"><path d="M0.5 1 H8.5 L4.5 5 Z" fill="#a3a3a3"/></svg>
 <div class="abs" style="left:1605px;top:831px;width:15px;height:1px;background:#c9cdd1"></div>
 <div class="abs" style="left:1605px;top:866px;width:15px;height:2px;background:#d2d5d8"></div>
 <div class="c" style="left:20px;top:878px;font-weight:bold;color:#a0a0a0">Rows :</div>
 <div class="c" style="left:67px;top:878px;font-weight:bold">35</div>
</div>
</body></html>
